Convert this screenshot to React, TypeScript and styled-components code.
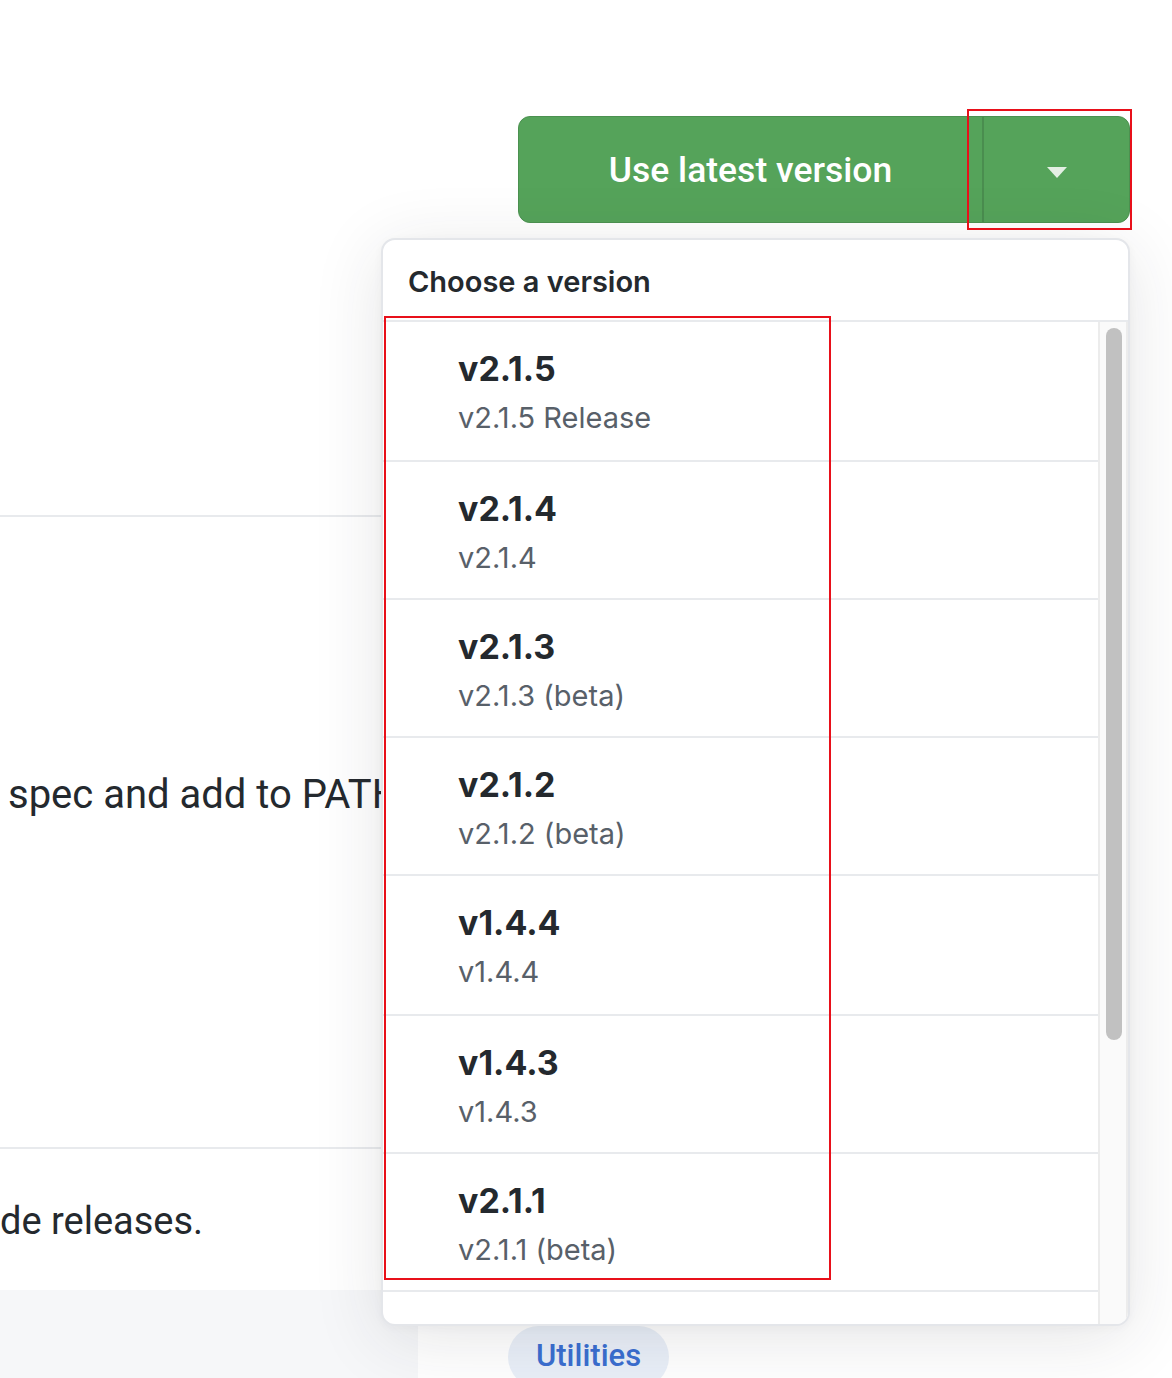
import React from "react";
import styled, { createGlobalStyle } from "styled-components";

const Global = createGlobalStyle`
  html, body { margin: 0; padding: 0; background: #fff; }
  body { font-family: Inter, "Noto Sans", sans-serif; color: #24292e; }
`;

const Page = styled.div`
  position: relative;
  width: 1172px;
  height: 1378px;
  overflow: hidden;
  background: #fff;
  display: flex;
  flex-direction: column;
`;

const TopArea = styled.div`
  height: 517px;
  flex: none;
  display: flex;
  flex-direction: column;
  justify-content: space-between;
`;

const ButtonRow = styled.div`
  display: flex;
  justify-content: flex-end;
  padding: 116px 42px 0 0;
`;

const Rule = styled.div`
  width: 418px;
  height: 2px;
  background: #e8eaed;
`;

const SplitButton = styled.div`
  display: flex;
  width: 612px;
  height: 107px;
  border-radius: 12px;
  background: #55a35a;
  border: 1px solid #4b9150;
  box-sizing: border-box;
  overflow: hidden;
`;

const MainPart = styled.div`
  flex: 1;
  display: flex;
  align-items: center;
  justify-content: center;
  color: #fff;
  font-family: Roboto, "Noto Sans", sans-serif;
  font-weight: 500;
  font-size: 35.5px;
`;

const CaretPart = styled.div`
  width: 145px;
  border-left: 2px solid #4a8d4f;
  display: flex;
  align-items: center;
  justify-content: center;
  padding-top: 6px;
`;

const Section = styled.div<{ $h: number; $top: number; $rule?: boolean }>`
  height: ${(p) => p.$h}px;
  width: 418px;
  flex: none;
  box-sizing: border-box;
  padding: ${(p) => p.$top}px 0 0 0;
  border-bottom: ${(p) => (p.$rule ? "2px solid #e8eaed" : "none")};
`;

const BodyText = styled.div<{ $x?: number; $size?: number }>`
  font-family: Roboto, "Noto Sans", sans-serif;
  font-size: ${(p) => p.$size ?? 40}px;
  line-height: 48px;
  white-space: nowrap;
  color: #24292e;
  padding-left: ${(p) => p.$x ?? 0}px;
`;

const Footer = styled.div`
  flex: 1;
  display: flex;
  align-items: flex-start;
  min-height: 0;
`;

const FooterGray = styled.div`
  width: 418px;
  height: 100%;
  background: #f6f7f9;
`;

const Pill = styled.div`
  margin: 36px 0 0 90px;
  height: 62px;
  flex: none;
  padding: 0 28px;
  border-radius: 31px;
  background: #e9eff8;
  color: #3a6ed0;
  font-family: Roboto, "Noto Sans", sans-serif;
  font-weight: 500;
  font-size: 31px;
  line-height: 1;
  display: flex;
  align-items: center;
  padding-bottom: 4px;
  box-sizing: border-box;
`;

const Menu = styled.div`
  position: absolute;
  left: 381px;
  top: 238px;
  width: 749px;
  height: 1088px;
  box-sizing: border-box;
  background: #fff;
  border: 2px solid #e4e6ea;
  border-radius: 14px;
  box-shadow: 0 12px 70px rgba(40, 44, 52, 0.12), 0 2px 8px rgba(40, 44, 52, 0.04);
  display: flex;
  flex-direction: column;
  overflow: hidden;
`;

const MenuHeader = styled.div`
  height: 82px;
  flex: none;
  box-sizing: border-box;
  padding: 24px 0 0 25px;
  font-size: 29px;
  font-weight: 600;
  color: #24292e;
  border-bottom: 2px solid #e8eaed;
`;

const MenuBody = styled.div`
  flex: 1;
  display: flex;
  overflow: hidden;
`;

const List = styled.div`
  flex: 1;
  display: flex;
  flex-direction: column;
`;

const Item = styled.div<{ $h: number }>`
  height: ${(p) => p.$h}px;
  flex: none;
  box-sizing: border-box;
  padding: 25px 0 0 75px;
  border-bottom: 2px solid #e8eaed;
`;

const ItemTitle = styled.div`
  font-size: 34px;
  line-height: 44px;
  font-weight: 700;
  color: #24292e;
`;

const ItemSub = styled.div`
  margin-top: 7px;
  font-size: 29px;
  line-height: 40px;
  color: #586069;
`;

const Track = styled.div`
  width: 30px;
  flex: none;
  background: #fafafa;
  border-left: 2px solid #ececec;
  border-right: 2px solid #ececec;
  box-sizing: border-box;
  padding: 6px 0 0 6px;
`;

const Thumb = styled.div`
  width: 16px;
  height: 712px;
  border-radius: 8px;
  background: #c1c1c1;
`;

const Annotation = styled.div<{ $x: number; $y: number; $w: number; $h: number }>`
  position: absolute;
  left: ${(p) => p.$x}px;
  top: ${(p) => p.$y}px;
  width: ${(p) => p.$w}px;
  height: ${(p) => p.$h}px;
  box-sizing: border-box;
  border: 2px solid #e8101a;
  pointer-events: none;
`;

const versions: [string, string, number][] = [
  ["v2.1.5", "v2.1.5 Release", 140],
  ["v2.1.4", "v2.1.4", 138],
  ["v2.1.3", "v2.1.3 (beta)", 138],
  ["v2.1.2", "v2.1.2 (beta)", 138],
  ["v1.4.4", "v1.4.4", 140],
  ["v1.4.3", "v1.4.3", 138],
  ["v2.1.1", "v2.1.1 (beta)", 138],
  ["v2.1.0", "v2.1.0 (beta)", 138],
];

export default function App() {
  return (
    <>
      <Global />
      <Page>
        <TopArea>
          <ButtonRow>
            <SplitButton>
              <MainPart>Use latest version</MainPart>
              <CaretPart>
                <svg width="20" height="11" viewBox="0 0 20 11">
                  <path d="M0 0 L20 0 L10 11 Z" fill="#e3efe3" />
                </svg>
              </CaretPart>
            </SplitButton>
          </ButtonRow>
          <Rule />
        </TopArea>
        <Section $h={632} $top={254} $rule>
          <BodyText $x={8}>spec and add to PATH</BodyText>
        </Section>
        <Section $h={141} $top={48}>
          <BodyText $size={38}>de releases.</BodyText>
        </Section>
        <Footer>
          <FooterGray />
          <Pill>Utilities</Pill>
        </Footer>

        <Menu>
          <MenuHeader>Choose a version</MenuHeader>
          <MenuBody>
            <List>
              {versions.map(([t, s, h]) => (
                <Item key={t} $h={h}>
                  <ItemTitle>{t}</ItemTitle>
                  <ItemSub>{s}</ItemSub>
                </Item>
              ))}
            </List>
            <Track>
              <Thumb />
            </Track>
          </MenuBody>
        </Menu>

        <Annotation $x={967} $y={109} $w={165} $h={121} />
        <Annotation $x={384} $y={316} $w={447} $h={964} />
      </Page>
    </>
  );
}
